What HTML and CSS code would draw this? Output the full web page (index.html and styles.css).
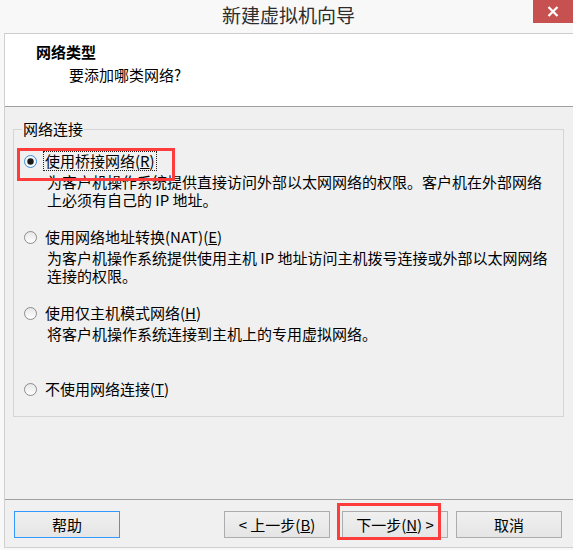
FILE: index.html
```html
<!DOCTYPE html>
<html lang="zh-CN">
<head>
<meta charset="utf-8">
<title>新建虚拟机向导</title>
<link rel="stylesheet" href="styles.css">
</head>
<body>
<div class="window">
  <div class="titlebar">
    <span class="title">新建虚拟机向导</span>
    <div class="close">
      <svg width="12" height="11" viewBox="0 0 12 11"><path d="M1.5 1 L10.5 10 M10.5 1 L1.5 10" stroke="#fff" stroke-width="2.2" fill="none"/></svg>
    </div>
  </div>
  <div class="client">
    <div class="header">
      <div class="h-title">网络类型</div>
      <div class="h-sub">要添加哪类网络?</div>
    </div>
    <div class="content">
      <fieldset class="group">
        <legend>网络连接</legend>
        <div class="option first">
          <div class="opt-row">
            <svg class="radio" width="13" height="13" viewBox="0 0 13 13">
              <circle cx="6.5" cy="6.5" r="6" fill="#f4f8fc" stroke="#3d8bd6" stroke-width="1"/>
              <circle cx="6.5" cy="6.5" r="3.2" fill="#1a1a1a"/>
            </svg>
            <span class="opt-label focus">使用桥接网络(<u>R</u>)</span>
          </div>
          <div class="desc">为客户机操作系统提供直接访问外部以太网网络的权限。客户机在外部网络<br>上必须有自己的 IP 地址。</div>
          <div class="annot annot-opt"></div>
        </div>
        <div class="option">
          <div class="opt-row">
            <svg class="radio" width="13" height="13" viewBox="0 0 13 13">
              <defs><linearGradient id="rg" x1="0" y1="0" x2="0" y2="1"><stop offset="0" stop-color="#e6e6e6"/><stop offset="1" stop-color="#ffffff"/></linearGradient></defs>
              <circle cx="6.5" cy="6.5" r="6" fill="url(#rg)" stroke="#8c8c8c" stroke-width="1"/>
            </svg>
            <span class="opt-label">使用网络地址转换(NAT)(<u>E</u>)</span>
          </div>
          <div class="desc">为客户机操作系统提供使用主机 IP 地址访问主机拨号连接或外部以太网网络<br>连接的权限。</div>
        </div>
        <div class="option">
          <div class="opt-row">
            <svg class="radio" width="13" height="13" viewBox="0 0 13 13">
              <circle cx="6.5" cy="6.5" r="6" fill="url(#rg)" stroke="#8c8c8c" stroke-width="1"/>
            </svg>
            <span class="opt-label">使用仅主机模式网络(<u>H</u>)</span>
          </div>
          <div class="desc">将客户机操作系统连接到主机上的专用虚拟网络。</div>
        </div>
        <div class="option">
          <div class="opt-row">
            <svg class="radio" width="13" height="13" viewBox="0 0 13 13">
              <circle cx="6.5" cy="6.5" r="6" fill="url(#rg)" stroke="#8c8c8c" stroke-width="1"/>
            </svg>
            <span class="opt-label">不使用网络连接(<u>T</u>)</span>
          </div>
        </div>
      </fieldset>
    </div>
    <div class="footer">
      <button class="btn btn-default">帮助</button>
      <div class="spacer"></div>
      <button class="btn btn-back">&lt; 上一步(<u>B</u>)</button>
      <div class="next-wrap">
        <button class="btn btn-next">下一步(<u>N</u>) &gt;</button>
        <div class="annot annot-next"></div>
      </div>
      <button class="btn btn-cancel">取消</button>
    </div>
  </div>
</div>
</body>
</html>
```

FILE: styles.css
```css
* { box-sizing: border-box; }
html, body {
  margin: 0;
  padding: 0;
}
body {
  width: 573px;
  height: 550px;
  overflow: hidden;
  background: #f8f8f8;
  font-family: "Noto Sans CJK SC", "Noto Sans", sans-serif;
  font-size: 15px;
  color: #000;
}
.window {
  width: 590px;
  height: 550px;
}
.titlebar {
  height: 33px;
  display: flex;
  align-items: flex-start;
  justify-content: center;
  position: relative;
  background: #f8f8f8;
  padding-right: 13px;
}
.title {
  font-size: 19px;
  line-height: 30px;
  color: #2d2d2d;
}
.close {
  position: absolute;
  left: 533px;
  top: 0;
  width: 46px;
  height: 23px;
  background: #c75050;
  display: flex;
  align-items: center;
  padding-left: 14px;
}
.close svg { display: block; }
.client {
  margin-left: 4px;
  width: 586px;
  height: 515px;
  border-left: 1px solid #d0d0d0;
  border-top: 1px solid #cdcdcd;
  border-bottom: 1px solid #d0d0d0;
  background: #f0f0f0;
  display: flex;
  flex-direction: column;
}
.header {
  height: 73px;
  background: #fff;
  border-bottom: 1px solid #a0a0a0;
  padding: 9px 0 0 31px;
  line-height: 18px;
  flex: none;
}
.h-title {
  font-weight: bold;
}
.h-sub {
  margin-top: 5px;
  padding-left: 33px;
}
.content {
  flex: 1;
  padding: 13px 0 0 8px;
}
.group {
  margin: 0;
  width: 551px;
  height: 297px;
  border: 1px solid #d5d5d5;
  padding: 14px 0 0 10px;
  display: flex;
  flex-direction: column;
  gap: 19px;
}
.group legend {
  padding: 0 1px;
  margin-left: -2px;
  line-height: 18px;
}
.option {
  position: relative;
  min-height: 57px;
}
.opt-row {
  display: flex;
  align-items: center;
  height: 18px;
}
.radio {
  display: block;
  flex: none;
  margin-right: 6px;
}
.opt-label {
  line-height: 18px;
  border: 1px dotted transparent;
  padding: 0 1px;
}
.opt-label.focus {
  border-color: #222;
}
.desc {
  margin-top: 3px;
  padding-left: 23px;
  line-height: 18px;
}
.annot {
  position: absolute;
  border: 3px solid #ff3c3c;
  pointer-events: none;
}
.annot-opt {
  left: -7px;
  top: -4px;
  width: 158px;
  height: 33px;
}
.footer {
  height: 48px;
  flex: none;
  border-top: 1px solid #a0a0a0;
  padding: 11px 0 0 9px;
  display: flex;
  align-items: flex-start;
}
.spacer {
  width: 104px;
}
.btn {
  width: 106px;
  height: 27px;
  border: 1px solid #acacac;
  background: linear-gradient(#f0f0f0, #e5e5e5);
  font-family: inherit;
  font-size: 15px;
  line-height: 18px;
  color: #000;
  padding: 0;
  margin: 0;
}
.btn-default {
  border-color: #3399ff;
}
.next-wrap {
  position: relative;
  margin-left: 12px;
  margin-right: 8px;
}
.btn-next { display: block; }
.annot-next {
  left: -5px;
  top: -8px;
  width: 104px;
  height: 37px;
}
```
